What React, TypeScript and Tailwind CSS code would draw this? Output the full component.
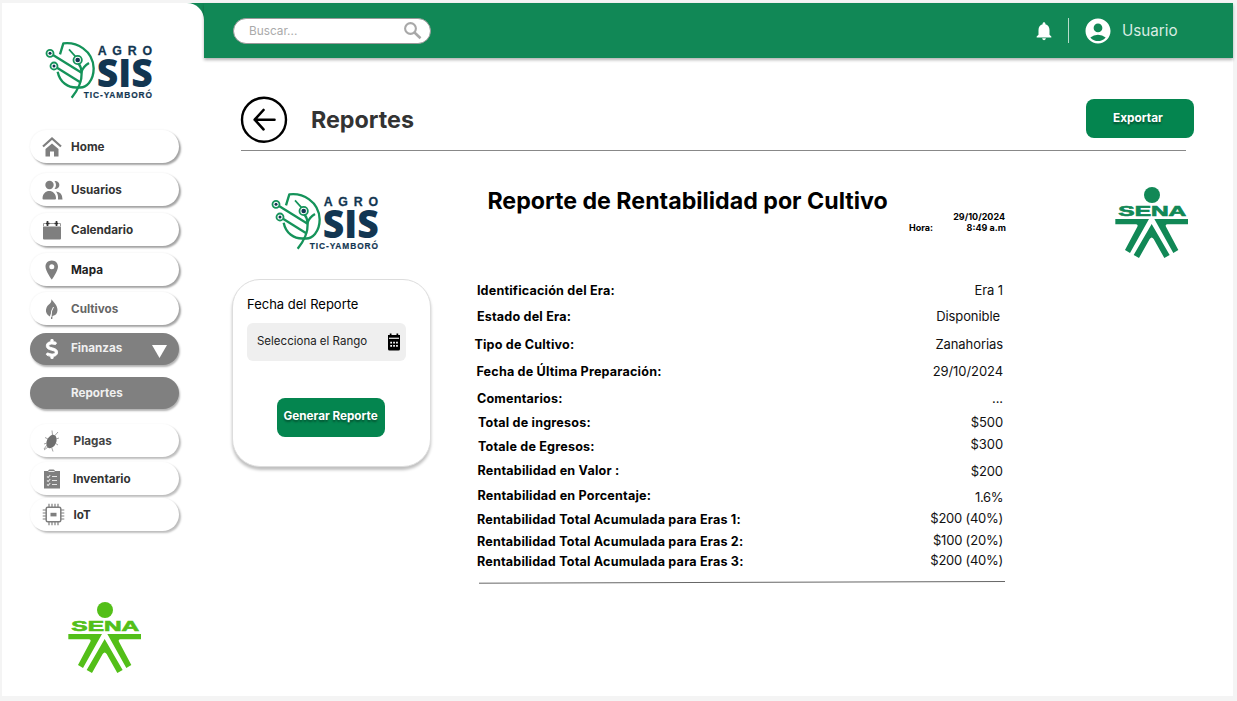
import type { ReactNode } from "react";
import { MdNotifications, MdAccountCircle } from "react-icons/md";
import { FaDollarSign } from "react-icons/fa6";

function AgroSisLogo() {
  return (
    <svg width="108" height="59" viewBox="138 123 324 177" className="block shrink-0 overflow-visible">
      <g fill="none" stroke="#15935a" strokeWidth="7" strokeLinejoin="round">
        <path d="M183 163 L193 130 C232 125 282 150 284 205 C284 242 262 266 238 262" />
        <path d="M176 215 C182 245 206 266 240 262" />
        <path d="M218 293 C240 266 249 245 248 218 C247 205 243 196 238 190" />
        <path d="M162 165 L249 219" />
        <path d="M174 203 L246 248" />
        <path d="M248 215 C252 200 260 195 270 189" />
        <path d="M210 148 L229 169" strokeWidth="5" />
        <circle cx="153" cy="160" r="10.5" strokeWidth="5.5" />
        <circle cx="165" cy="198" r="10.5" strokeWidth="5.5" />
        <circle cx="236" cy="180" r="12.5" strokeWidth="5.5" />
      </g>
      <g fill="#123652">
        <circle cx="153" cy="160" r="4.5" />
        <circle cx="165" cy="198" r="4.5" />
        <circle cx="236" cy="180" r="7" />
        <text x="296" y="164" fontSize="37" fontWeight="700" textLength="163" stroke="#123652" strokeWidth=".8" className="font-['Liberation_Sans']">AGRO</text>
        <text x="293" y="261" fontSize="115" fontWeight="800" textLength="168" lengthAdjust="spacingAndGlyphs" className="font-['Open_Sans']">SIS</text>
        <text x="254" y="295" fontSize="25" fontWeight="700" textLength="205" stroke="#123652" strokeWidth=".6" className="font-['Liberation_Sans']">TIC-YAMBORÓ</text>
      </g>
    </svg>
  );
}

function SenaLogo({ className }: { className: string }) {
  return (
    <svg width="75.33" height="74.67" viewBox="50 30 226 224" fill="currentColor" className={`block shrink-0 ${className}`}>
      <circle cx="164" cy="60" r="24" />
      <text x="63" y="123" fontSize="44" fontWeight="700" textLength="204" lengthAdjust="spacingAndGlyphs" stroke="currentColor" strokeWidth="2" className="font-['Liberation_Sans']">SENA</text>
      <path d="M54 132H155L98 234L83 225L120 155Q123 148 116 147.500H54Z" />
      <path d="M272 132H171L228 234L243 225L206 155Q203 148 210 147.500H272Z" />
      <path d="M163 147L109 240L125 249L157 192Q163 183 169 192L201 249L217 240Z" />
    </svg>
  );
}

const HomeIcon = () => (
  <svg width="20" height="20" viewBox="0 0 20 20" fill="#7f7f7f">
    <path d="M1 9.500L10 1.500L19 9.500" fill="none" stroke="#7f7f7f" strokeWidth="2.200" />
    <path d="M10 6.500L16.500 12V19.500H12V14.500H8V19.500H3.500V12Z" />
  </svg>
);
const UsersIcon = () => (
  <svg width="21" height="20" viewBox="0 0 21 20" fill="#7f7f7f">
    <circle cx="7.500" cy="5" r="4.200" />
    <path d="M12.500 1C19 0.500 19 9.500 12.500 9Q15.500 5 12.500 1Z" />
    <path d="M.5 18.500C.5 8.500 14 8.500 14 18.500Q14 19.500 13 19.500H1.500Q.5 19.500.5 18.500Z" />
    <path d="M14 11.500Q20.500 12 20.500 19.500H16Q16.500 14.500 14 11.500Z" />
  </svg>
);
const CalendarIcon = () => (
  <svg width="20" height="20" viewBox="0 0 20 20" fill="#7f7f7f">
    <path d="M1 6.500H19V18.500Q19 19.500 18 19.500H2Q1 19.500 1 18.500Z" />
    <path d="M1.500 6V3.500H18.500V6" fill="none" stroke="#999" />
    <path d="M5.500 1V6M14.500 1V6M4 3.500H7.500M12.500 3.500H16" stroke="#333" strokeWidth="1.700" />
  </svg>
);
const PinIcon = () => (
  <svg width="20" height="20" viewBox="0 0 20 20" fill="#7f7f7f">
    <path fillRule="evenodd" d="M9.800.5C5.800.5 3.500 3.400 3.500 6.700C3.500 11 9.800 19.500 9.800 19.500S16 11 16 6.700C16 3.400 13.700.5 9.800.5ZM9.800 4.200A2.500 2.500 0 1 1 9.800 9.200A2.500 2.500 0 1 1 9.800 4.200Z" />
  </svg>
);
const LeafIcon = () => (
  <svg width="20" height="20" viewBox="0 0 20 20" fill="#7f7f7f">
    <path d="M9.500.3C11 3 15.500 6 15.500 11C15.500 14.500 13.500 16.500 10.500 17L10.300 20H9L9.300 14L7.800 17.500C1.500 14 4 7 8 4.500Q9.500 3 9.500.3Z" />
    <path d="M9 18Q9 11 11.500 8" fill="none" stroke="#fff" strokeWidth="1" />
  </svg>
);
const BugIcon = () => (
  <svg width="20" height="22" viewBox="0 0 20 22" fill="#6f6f6f">
    <ellipse cx="9.500" cy="11.500" rx="4.700" ry="7" transform="rotate(24 9.500 11.500)" />
    <path d="M10.500 5L10 .5M12.500 6L16 2M14 9L17 8M13 13L16 15M6 9L3 7.500M5 13L2 14M6 17L2 20M9.500 17L11 21.500M5 15L2 19" fill="none" stroke="#8c8c8c" strokeWidth=".8" />
  </svg>
);
const ClipboardIcon = () => (
  <svg width="20" height="20" viewBox="0 0 20 20">
    <path d="M2 2H6Q6.500.5 7.500.5H11.500Q12.500.5 13 2H18V19.500H2Z" fill="#7f7f7f" />
    <path d="M6.500 2.500H12.500M10 7.500H15M10 11.500H15M10 15.500H15M5 7.500L6.200 8.500L8.200 6M5 11.500L6.200 12.500L8.200 10M5 15.500L6.200 16.500L8.200 14" fill="none" stroke="#e4e4e4" strokeWidth="1.100" />
  </svg>
);
const ChipIcon = () => (
  <svg width="23" height="23" viewBox="0 0 23 23" fill="none" stroke="#7f7f7f" className="relative left-[1px] shrink-0">
    <rect x="4.200" y="4.200" width="14.600" height="14.600" rx="1.500" strokeWidth="1.500" />
    <path d="M7 4V.7M10 4V.7M13 4V.7M16 4V.7M7 19V22.300M10 19V22.300M13 19V22.300M16 19V22.300M4 7H.7M4 10H.7M4 13H.7M4 16H.7M19 7H22.300M19 10H22.300M19 13H22.300M19 16H22.300" strokeWidth="1.200" />
    <rect x="8.500" y="9.800" width="6" height="3.600" fill="#7f7f7f" stroke="none" />
  </svg>
);
const SearchIcon = () => (
  <svg width="20" height="20" viewBox="0 0 20 20" fill="none" stroke="#a8a8a8">
    <circle cx="7.500" cy="7.500" r="5.400" strokeWidth="2.100" />
    <path d="M11.500 11.500L17.500 17.300" strokeWidth="2.600" />
  </svg>
);
const DateIcon = () => (
  <svg width="14" height="18" viewBox="0 0 14 18" className="-mt-[1px]">
    <path d="M1 2H2.800V.5H4.500V2H9.500V.5H11.200V2H13V16Q13 17.500 11.500 17.500H2.500Q1 17.500 1 16Z" fill="#000" />
    <path d="M2 5.300H12" stroke="#ddd" strokeWidth="1.300" />
    <path d="M3.300 9.700H10.800M3.300 12.800H10.800" stroke="#fff" strokeWidth="1.700" strokeDasharray="1.700 1.200" />
  </svg>
);

const light = "bg-white shadow-[2px_2px_2px_rgba(0,0,0,0.35),0_0_2px_rgba(0,0,0,0.08)]";
const faint = "bg-white shadow-[2px_2px_2px_rgba(0,0,0,0.25),0_0_2px_rgba(0,0,0,0.05)]";
const dark = "bg-[#808080] shadow-[1px_2px_2px_rgba(0,0,0,0.3)]";

const nav: { label: string; icon: ReactNode; box: string; text: string; arrow?: boolean }[] = [
  { label: "Home", icon: <HomeIcon />, box: `${light} h-[33px]`, text: "pt-[2px] pl-[6px] text-[#333]" },
  { label: "Usuarios", icon: <UsersIcon />, box: `${light} mt-[10px] h-[33px]`, text: "pt-[2px] pl-[6px] text-[#333]" },
  { label: "Calendario", icon: <CalendarIcon />, box: `${light} mt-[7px] h-[33px]`, text: "pt-[2px] pl-[6px] text-[#333]" },
  { label: "Mapa", icon: <PinIcon />, box: `${light} mt-[7px] h-[33px]`, text: "pt-[2px] pl-[6px] text-[#222]" },
  { label: "Cultivos", icon: <LeafIcon />, box: `${light} mt-[6px] h-[33px]`, text: "pt-[2px] pl-[6px] text-[#666]" },
  { label: "Finanzas", icon: <FaDollarSign size={20} color="#fff" stroke="#fff" strokeWidth={22} className="-ml-[1px]" />, box: `${dark} mt-[8px] h-[32px]`, text: "-mt-[1px] pl-[6px] text-[#f0f0f0]", arrow: true },
  { label: "Reportes", icon: null, box: `${dark} mt-[12px] h-[32px]`, text: "pt-[1px] pl-[6px] text-[#f0f0f0]" },
  { label: "Plagas", icon: <BugIcon />, box: `${faint} mt-[15px] h-[33px]`, text: "pt-[2px] pl-[8.6px] text-[#444]" },
  { label: "Inventario", icon: <ClipboardIcon />, box: `${faint} mt-[5px] h-[33px]`, text: "pt-[2px] pl-[8px] text-[#333]" },
  { label: "IoT", icon: <ChipIcon />, box: `${faint} mt-[3px] h-[33px]`, text: "pt-[2px] pl-[8.6px] text-[#333]" },
];

const labels = [
  ["Identificación del Era:", "h-[26px] pl-[2.5px]"],
  ["Estado del Era:", "h-[28px] pl-[2.5px]"],
  ["Tipo de Cultivo:", "h-[27px]"],
  ["Fecha de Última Preparación:", "h-[27px] pl-[2px]"],
  ["Comentarios:", "h-[24px] pl-[2.5px]"],
  ["Total de ingresos:", "h-[24px] pl-[3.5px]"],
  ["Totale de Egresos:", "h-[24px] pl-[3.5px]"],
  ["Rentabilidad en Valor :", "h-[25px] pl-[3px]"],
  ["Rentabilidad en Porcentaje:", "h-[24px] pl-[3px]"],
  ["Rentabilidad Total Acumulada para Eras 1:", "h-[22px] pl-[2.5px]"],
  ["Rentabilidad Total Acumulada para Eras 2:", "h-[20px] pl-[2.5px]"],
  ["Rentabilidad Total Acumulada para Eras 3:", "h-[16px] pl-[2.5px]"],
];

const values = [
  ["Era 1", "h-[26px]"],
  ["Disponible", "h-[28px] pr-[3px]"],
  ["Zanahorias", "h-[27px]"],
  ["29/10/2024", "h-[27px]"],
  ["...", "h-[24px]"],
  ["$500", "h-[22px]"],
  ["$300", "h-[27px]"],
  ["$200", "h-[26px]"],
  ["1.6%", "h-[21px] tracking-[-0.4px]"],
  ["$200 (40%)", "h-[22px] tracking-[-0.25px]"],
  ["$100 (20%)", "h-[20px] tracking-[-0.2px]"],
  ["$200 (40%)", "h-[16px] tracking-[-0.25px]"],
];

function Sidebar() {
  return (
    <aside className="w-[202.4px] shrink-0 bg-[#118856]">
      <div className="flex h-full flex-col rounded-tr-[17px] bg-white">
        <div className="pt-[38px] pl-[43.4px]">
          <AgroSisLogo />
        </div>
        <nav className="mt-[30px] ml-[28.4px] flex w-[149px] flex-col">
          {nav.map((n) => (
            <div key={n.label} className={`flex shrink-0 items-center rounded-full pl-[9.6px] text-[11.7px] font-bold ${n.box}`}>
              <span className="flex w-[25px] shrink-0 justify-center">{n.icon}</span>
              <span className={n.text}>{n.label}</span>
              {n.arrow && (
                <svg width="15" height="13" viewBox="0 0 15 13" className="mt-[4px] mr-[12.4px] ml-auto">
                  <path d="M0 0H15L7.500 13Z" fill="#fff" />
                </svg>
              )}
            </div>
          ))}
        </nav>
        <div className="mt-[69px] pl-[64.600px]">
          <SenaLogo className="text-[#53bf18]" />
        </div>
      </div>
    </aside>
  );
}

export default function App() {
  return (
    <div className="h-[701px] w-[1237px] overflow-hidden bg-[#f4f4f4] pt-[3px] pr-[4px] pb-[5px] pl-[2px] font-['Inter',sans-serif] text-black">
      <div className="flex h-full bg-white">
        <Sidebar />
        <main className="flex min-w-0 flex-1 flex-col">
          <header className="flex h-[55px] shrink-0 items-center bg-[#118856] pl-[28.6px] shadow-[0_2px_3px_rgba(0,0,0,0.3)]">
            <div className="flex h-[26px] w-[198.4px] items-center justify-between rounded-full border border-[#999] bg-white pr-[7px] pl-[15px]">
              <span className="pt-[2px] text-[11.8px] text-[#aaa]">Buscar...</span>
              <SearchIcon />
            </div>
            <MdNotifications size={22} color="#fff" className="ml-[601.6px]" />
            <div className="ml-[13px] h-[25px] w-px bg-[#b7dccb]" />
            <MdAccountCircle size={30} color="#fff" className="ml-[14px]" />
            <span className="mt-[1px] ml-[9px] text-[15.200px] text-[#d9ece3]">Usuario</span>
          </header>

          <section className="ml-[36px] flex h-[93px] w-[953.6px] shrink-0 pt-[38px]">
            <svg width="48" height="48" viewBox="0 0 48 48" fill="none" stroke="#000" strokeWidth="2.400" className="-ml-[0.5px] shrink-0" strokeLinecap="round" strokeLinejoin="round">
              <circle cx="24" cy="23.700" r="22" />
              <path d="M34.500 23.700H14.700M23.500 14L14.700 23.700L23.500 33.400" strokeWidth="2.600" />
            </svg>
            <h1 className="mt-[9px] ml-[23px] text-[23.3px] leading-[30px] font-bold text-[#333]">Reportes</h1>
            <button className="mt-[3px] ml-auto h-[39px] w-[108px] rounded-[8px] bg-[#04854f] pr-[4px] text-[11.8px] font-bold text-white [text-shadow:0_2px_2px_rgba(0,0,0,0.4)]">
              Exportar
            </button>
          </section>
          <div className="-mt-[1px] ml-[36.6px] h-px w-[945px] shrink-0 bg-[#888]" />

          <div className="flex min-h-0 flex-1">
            <div className="ml-[28px] w-[199px] shrink-0 pt-[41px]">
              <div className="pl-[38.2px]">
                <AgroSisLogo />
              </div>
              <div className="mt-[28px] flex h-[188px] flex-col rounded-[28px] border border-[#ddd] bg-white px-[13.6px] pt-[15px] shadow-[0_3px_3px_rgba(0,0,0,0.25)]">
                <span className="text-[13px] leading-[18px]">Fecha del Reporte</span>
                <div className="mt-[10px] flex h-[38px] w-[159px] items-center justify-between rounded-[6px] bg-[#efefef] pr-[5px] pl-[10px]">
                  <span className="-mt-[1.5px] text-[11.500px] text-[#222]">Selecciona el Rango</span>
                  <DateIcon />
                </div>
                <button className="mt-[37px] ml-[29.6px] h-[39px] w-[108px] shrink-0 rounded-[8px] bg-[#04854f] pb-[1px] text-[11.7px] font-bold whitespace-nowrap text-white [text-shadow:0_2px_2px_rgba(0,0,0,0.4)]">
                  Generar Reporte
                </button>
              </div>
            </div>

            <div className="ml-[43px] w-[531px] shrink-0">
              <h2 className="mt-[34px] ml-[13px] text-[23.200px] leading-[32px] font-bold whitespace-nowrap">Reporte de Rentabilidad por Cultivo</h2>
              <div className="-mt-[6px] h-[22px] text-[9px] leading-[11px] font-bold">
                <div className="pr-[0.4px] text-right">29/10/2024</div>
                <div className="flex justify-between">
                  <span className="pl-[434.6px]">Hora:</span>
                  <span className="-mr-[0.6px]">8:49 a.m</span>
                </div>
              </div>
              <div className="mt-[49px] flex justify-between leading-[16px] whitespace-nowrap">
                <div className="pt-[1px] text-[12.6px] font-bold tracking-[0.19px]">
                  {labels.map(([t, c]) => (
                    <div key={t} className={c}>{t}</div>
                  ))}
                </div>
                <div className="pr-[2.4px] text-right text-[13px] tracking-[-0.08px] text-[#111]">
                  {values.map(([t, c], i) => (
                    <div key={i} className={c}>{t}</div>
                  ))}
                </div>
              </div>
              <svg width="531" height="4" viewBox="0 0 531 4" className="mt-[10px] block">
                <path d="M5 3.200L531 1.500" stroke="#666" strokeWidth="1" />
              </svg>
            </div>
            <div className="ml-[108.200px] pt-[33.600px]">
              <SenaLogo className="text-[#118856]" />
            </div>
          </div>
        </main>
      </div>
    </div>
  );
}
